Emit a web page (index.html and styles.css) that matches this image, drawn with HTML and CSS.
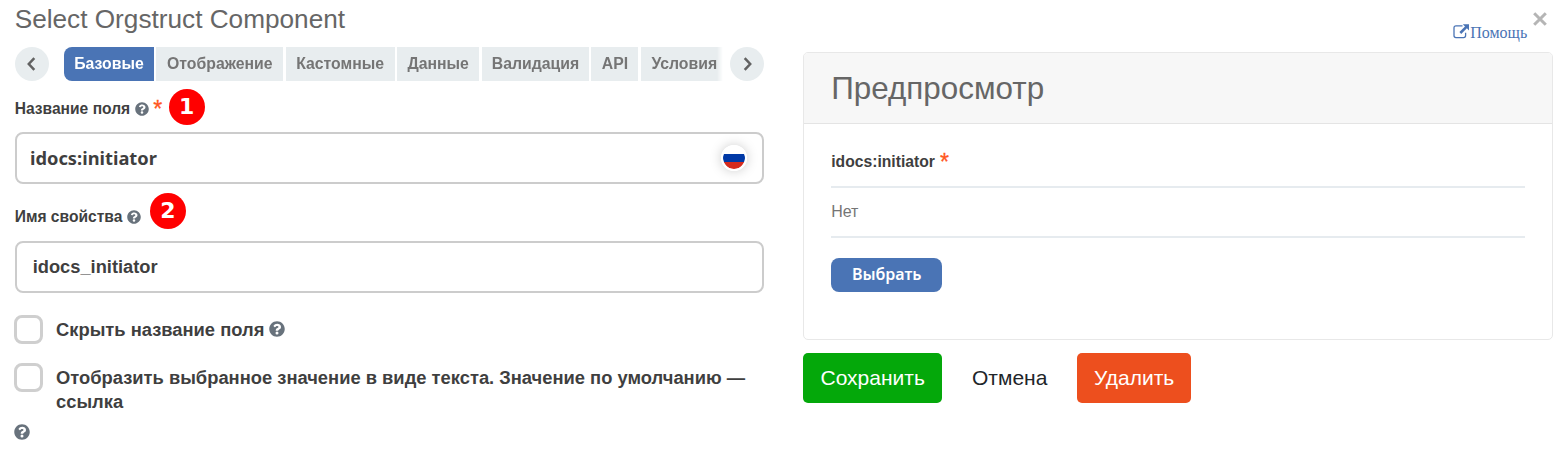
FILE: index.html
```
<!DOCTYPE html>
<html lang="ru">
<head>
<meta charset="utf-8">
<title>Select Orgstruct Component</title>
<link rel="stylesheet" href="styles.css">
</head>
<body>
<svg class="defs" width="0" height="0">
  <symbol id="help" viewBox="0 0 512 512"><path fill="#68727c" d="M504 256c0 137-111 248-248 248S8 393 8 256 119 8 256 8s248 111 248 248zM263 90c-55 0-90 23-117 64-3 5-2 12 3 16l35 26c5 4 13 3 17-2 18-23 30-36 57-36 20 0 46 13 46 33 0 15-12 23-33 34-24 14-56 31-56 73v4c0 7 5 12 12 12h58c7 0 12-5 12-12v-1c0-30 87-31 87-111 0-60-63-100-121-100zm-7 248a48 48 0 1 0 0 96 48 48 0 0 0 0-96z"/></symbol>
</svg>
<div class="dialog">
  <main class="settings">
    <h1 class="title"><span>Select Orgstruct Component</span></h1>
    <nav class="tabs">
      <button class="arrow"><svg width="9" height="14" viewBox="0 0 9 14"><path d="M7.3 1.2 1.8 7l5.5 5.8"/></svg></button>
      <div class="strip">
        <a class="tab t1 active">Базовые</a><a class="tab t2">Отображение</a><a class="tab t3">Кастомные</a><a class="tab t4">Данные</a><a class="tab t5">Валидация</a><a class="tab t6">API</a><a class="tab t7">Условия</a>
      </div>
      <button class="arrow next"><svg width="9" height="14" viewBox="0 0 9 14"><path d="M1.7 1.2 7.2 7l-5.5 5.8"/></svg></button>
    </nav>
    <div class="label first"><span class="name">Название поля</span><svg class="help"><use href="#help"/></svg><span class="star">*</span><span class="mark">1</span></div>
    <div class="input wide"><span>idocs:initiator</span><i class="flag"></i></div>
    <div class="label second"><span class="name">Имя свойства</span><svg class="help"><use href="#help"/></svg><span class="mark">2</span></div>
    <div class="input key"><span>idocs_initiator</span></div>
    <div class="check hide"><i class="box"></i><span>Скрыть название поля</span><svg class="help big"><use href="#help"/></svg></div>
    <div class="check"><i class="box"></i><p>Отобразить выбранное значение в виде текста. Значение по умолчанию —<br>ссылка</p></div>
    <svg class="help big last"><use href="#help"/></svg>
  </main>
  <aside class="side">
    <div class="tools">
      <a class="link"><svg width="17" height="15" viewBox="0 0 17 15"><path d="M9.5 1.9H3Q1 1.9 1 3.9v7.7q0 2.1 2 2.1h7.6q2 0 2-2.1V8.8" fill="none" stroke="#4a74b5" stroke-width="1.3"/><path d="M9.8.2H16v6.2l-2.1-2.1-5.7 5.6-1.8-1.8 5.6-5.7z" fill="#4a74b5"/></svg><span>Помощь</span></a>
      <svg class="close" width="16" height="16" viewBox="0 0 16 16"><path d="M2.2 2.2l11.6 11.6M13.8 2.2 2.2 13.8"/></svg>
    </div>
    <section class="card">
      <h2 class="head"><span>Предпросмотр</span></h2>
      <div class="body">
        <div class="caption"><span>idocs:initiator</span><b>*</b></div>
        <div class="value"><span>Нет</span></div>
        <button class="choose">Выбрать</button>
      </div>
    </section>
    <div class="actions">
      <button class="save">Сохранить</button>
      <button class="cancel">Отмена</button>
      <button class="delete">Удалить</button>
    </div>
  </aside>
</div>
</body>
</html>
```
FILE: styles.css
```
* { box-sizing: border-box; }
body { margin: 0; height: 455px; overflow: hidden; background: #fff; font-family: "Liberation Sans", Arial, sans-serif; color: #3f3f3f; }
button { border: 0; padding: 0; font-family: inherit; }
.defs { position: absolute; }
.dialog { display: grid; grid-template-columns: 749px 750px; column-gap: 39.5px; padding-left: 14.7px; height: 455px; }
.settings, .side { display: flex; flex-direction: column; align-items: stretch; min-width: 0; }

.title { margin: 0; height: 47px; padding-top: 3px; font-size: 26.2px; line-height: 32px; font-weight: 400; color: #666; white-space: nowrap; }
.tabs { display: flex; height: 34px; }
.arrow { display: flex; align-items: center; justify-content: center; width: 34px; height: 34px; border-radius: 50%; background: #e8edef; }
.arrow.next { padding-left: 2px; }
.arrow path { fill: none; stroke: #626262; stroke-width: 2.5; }
.strip { display: flex; gap: 2.3px; width: 660px; margin: 0 5.7px 0 15.3px; overflow: hidden; -webkit-mask-image: linear-gradient(90deg, #000 653px, transparent 659px); mask-image: linear-gradient(90deg, #000 653px, transparent 659px); }
.tab { flex: none; background: #e8edef; color: #757575; font-size: 15.8px; line-height: 33px; font-weight: 700; text-align: center; white-space: nowrap; }
.tab.active { background: #4a74b5; color: #fff; border-radius: 8px 0 0 8px; }
.t1 { width: 90px; } .t2 { width: 127px; } .t3 { width: 109px; } .t4 { width: 82.5px; } .t5 { width: 107.5px; } .t6 { width: 47px; } .t7 { width: 90px; padding-right: 3px; }

.label { display: flex; align-items: center; font-size: 15.6px; font-weight: 700; white-space: nowrap; }
.first { height: 51px; }
.second { height: 57px; }
.help { width: 14px; height: 14px; margin-left: 5px; flex: none; }
.help.big { width: 16px; height: 16px; margin: -1px 0 0 5px; }
.help.last { margin: 10px 0 0 -.7px; }
.first .name, .first .help { margin-top: 4px; }
.star { margin-left: 4px; color: #ff5722; font-size: 23px; line-height: 23px; padding-top: 5px; font-weight: 400; -webkit-text-stroke: .3px #ff5722; }
.mark { width: 36px; height: 36px; border-radius: 50%; background: #f00; color: #fff; font: 700 22px/36px "DejaVu Sans", sans-serif; text-align: center; }
.first .mark { margin: 1px 0 0 6.5px; }
.second .mark { margin: 0 0 4px 8.5px; }
.second .name, .second .help { margin-top: 9px; }
.input { display: flex; align-items: center; height: 52px; border: 2px solid #ccc; border-radius: 8px; font-weight: 700; font-size: 18.3px; }
.wide { justify-content: space-between; padding: 0 15px 0 13.3px; font-family: "Noto Sans", sans-serif; }
.wide span { margin-top: -2px; }
.key { padding-left: 16px; }
.flag { width: 26px; height: 26px; border: 2px solid #fff; border-radius: 50%; background: linear-gradient(#fff 0 30%, #0039a6 30% 68%, #d52b1e 68%) padding-box; box-shadow: 0 0 12px #ccc; }
.check { display: flex; align-items: flex-start; margin-left: -.7px; font-size: 18.35px; line-height: 24px; font-weight: 700; white-space: nowrap; }
.hide { align-items: center; margin: 22px 0 19px -.7px; }
.box { flex: none; width: 29px; height: 29px; margin-right: 13px; border: 3px solid #cfcfcf; border-radius: 8px; }
.check p { margin: 3px 0 0; }

.tools { display: flex; justify-content: flex-end; height: 52px; }
.link { display: flex; align-items: flex-start; height: 20px; margin-top: 23px; color: #4a74b5; font: 16px/20px "Liberation Serif", serif; }
.link svg { margin-top: 1px; }
.close { margin: 11px 5px 0; }
.close path { stroke: #b5b5b5; stroke-width: 3; }
.card { height: 288px; border: 1px solid #e8e8e8; border-radius: 5px; overflow: hidden; }
.head { height: 71px; margin: 0; padding: 0 27px; background: #f7f7f7; border-bottom: 1px solid #e4e4e4; color: #666; font-size: 31.4px; line-height: 71px; font-weight: 400; }
.body { padding: 0 27px; }
.caption { display: flex; align-items: center; gap: 5px; height: 64px; padding-top: 13px; border-bottom: 2px solid #e6ebef; font-size: 15.7px; font-weight: 700; }
.caption b { color: #ff5722; font-size: 23px; line-height: 23px; padding-top: 2px; font-weight: 400; -webkit-text-stroke: .3px #ff5722; }
.value { height: 50px; border-bottom: 2px solid #e6ebef; color: #757575; font-size: 16px; line-height: 47px; }
.choose { display: block; width: 111px; height: 34px; margin-top: 20px; border-radius: 8px; background: #4a74b5; color: #fff; font: 600 16px/32px "Noto Sans", sans-serif; padding-bottom: 2px; }
.actions { display: flex; margin-top: 13px; }
.actions button { height: 50px; border-radius: 5px; font-size: 21px; line-height: 50px; }
.save { width: 139px; background: #04a80a; color: #fff; }
.cancel { width: 135px; background: transparent; color: #212529; }
.delete { width: 114px; background: #ed4f1e; color: #fff; }
```
